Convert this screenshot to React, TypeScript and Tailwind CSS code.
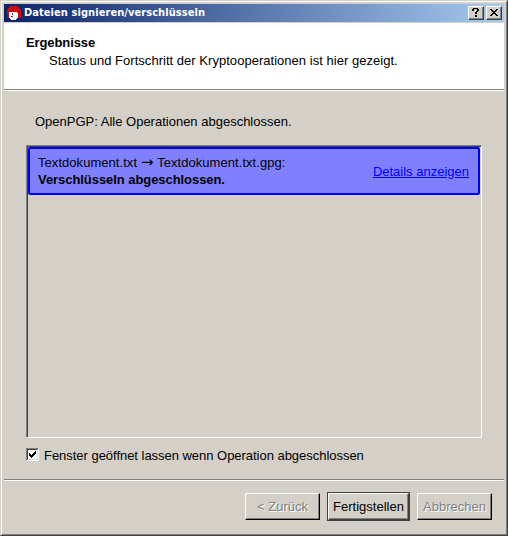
import React from 'react';

function AppIcon() {
  return (
    <svg width="16" height="16" viewBox="0 0 16 16" shapeRendering="crispEdges" className="block shrink-0">
      <path fill="#d40808" d="M4 1h7v1h2v1h1v2h1v8h-4v-1H3v1H1V5h1V3h1V2h1z" />
      <path fill="#9c0a14" d="M11 1h1v1h1v1h-1v1h-1zM13 5h1v3h-1zM12 9h1v3h-1zM1 8h1v5H1zM5 3h3v1H5z" />
      <path fill="#fff" d="M3 7h8v1h1v5h-1v1h-1v1H5v-1H4v-1H3z" />
      <path fill="#33333f" d="M6 8h1v2H6zM5 11h2v1H5z" />
      <path fill="#b8b8c4" d="M7 10h1v1H7z" />
    </svg>
  );
}

function CaptionButton({ children, label }: { children: React.ReactNode; label: string }) {
  return (
    <button
      aria-label={label}
      className="h-[14px] w-4 shrink-0 border border-t-white border-l-white border-r-[#404040] border-b-[#404040] bg-[#d4d0c8] shadow-[inset_-1px_-1px_0_#808080]"
    >
      <svg width="14" height="12" viewBox="0 0 14 12" shapeRendering="crispEdges" className="block">
        {children}
      </svg>
    </button>
  );
}

function Rule() {
  return <div className="h-[2px] shrink-0 border-t border-b border-t-[#808080] border-b-white" />;
}

const disabledButton =
  'h-[27px] w-[75px] border border-t-white border-l-white border-r-black border-b-black pb-px whitespace-nowrap text-[#808080] shadow-[inset_-1px_-1px_0_#808080] [text-shadow:1px_1px_0_#fff]';

export default function App() {
  return (
    <div className="h-[536px] w-[508px] border border-t-[#d4d0c8] border-l-[#d4d0c8] border-r-[#404040] border-b-[#404040] bg-[#d4d0c8] font-['Liberation_Sans',Arial,sans-serif] text-[13px] leading-[17px] text-black">
      <div className="flex h-[534px] w-[506px] flex-col border border-t-white border-l-white border-r-[#808080] border-b-[#808080] p-[2px]">
        <header className="flex h-[18px] shrink-0 items-center bg-linear-to-r/srgb from-[#0a246a] to-[#a6caf0] pr-[2px] pl-[2px]">
          <AppIcon />
          <span className="ml-[2px] flex-1 font-['DejaVu_Sans_Condensed','DejaVu_Sans',sans-serif] text-[11px] leading-[18px] font-bold tracking-[0.07px] whitespace-nowrap text-white">
            Dateien signieren/verschlüsseln
          </span>
          <CaptionButton label="Hilfe">
            <path d="M4 1h5v1H4zM3 2h2v2H3zM8 2h2v2H8zM7 4h2v1H7zM6 5h2v2H6zM6 8h2v2H6z" />
          </CaptionButton>
          <span className="w-[2px]" />
          <CaptionButton label="Schließen">
            <path d="M3 2h2v1H3zM9 2h2v1H9zM4 3h2v1H4zM8 3h2v1H8zM5 4h4v1H5zM6 5h2v1H6zM5 6h4v1H5zM4 7h2v1H4zM8 7h2v1H8zM3 8h2v1H3zM9 8h2v1H9z" />
          </CaptionButton>
        </header>
        <section className="mt-px h-[66px] shrink-0 bg-white pt-[11px] pl-[22px]">
          <h1 className="text-[13px] leading-[18px] font-bold tracking-[-0.1px]">Ergebnisse</h1>
          <p className="pl-[23px] leading-[18px] tracking-[0.03px] whitespace-nowrap">
            Status und Fortschritt der Kryptooperationen ist hier gezeigt.
          </p>
        </section>
        <Rule />
        <main className="flex h-[388px] shrink-0 flex-col pt-[22px] pl-[22px]">
          <p className="h-[32px] pl-[9px] leading-[18px] whitespace-nowrap">OpenPGP: Alle Operationen abgeschlossen.</p>
          <div className="h-[293px] w-[456px] border border-t-[#808080] border-l-[#808080] border-r-white border-b-white">
            <div className="h-[291px] border-t border-l border-[#404040]">
              <div className="flex h-[48px] w-[452px] items-center justify-between rounded-[2px] border-2 border-[#0000ff] bg-[#8080ff] pr-[9px] pl-2">
                <div className="leading-[17px] whitespace-nowrap">
                  <div className="h-[17px] tracking-[0.05px]">
                    Textdokument.txt{' '}
                    <span className="inline-block w-[13px] text-center font-['DejaVu_Sans',sans-serif] text-[15px] leading-[16px]">→</span>{' '}
                    Textdokument.txt.gpg:
                  </div>
                  <div className="font-bold tracking-[-0.06px]">Verschlüsseln abgeschlossen.</div>
                </div>
                <a className="whitespace-nowrap text-[#0000ff] underline">Details anzeigen</a>
              </div>
            </div>
          </div>
          <label className="mt-[8px] flex h-[17px] items-center">
            <span className="size-[13px] border border-t-[#808080] border-l-[#808080] border-r-white border-b-white">
              <span className="block size-[11px] border border-t-[#404040] border-l-[#404040] border-r-[#d4d0c8] border-b-[#d4d0c8] bg-white">
                <svg width="9" height="9" viewBox="0 0 9 9" shapeRendering="crispEdges" className="block">
                  <path d="M1 3h1v1h1v1h1V4h1V3h1V2h1V1h1v3H7v1H6v1H5v1H4v1H3V7H2V6H1z" />
                </svg>
              </span>
            </span>
            <span className="ml-[5px] pt-px tracking-[-0.03px] whitespace-nowrap">Fenster geöffnet lassen wenn Operation abgeschlossen</span>
          </label>
        </main>
        <Rule />
        <footer className="flex items-center justify-end pt-[11px] pr-[12px]">
          <button className={disabledButton}>&lt; Zurück</button>
          <button className="ml-[7px] h-[29px] w-[83px] border border-[#404040] whitespace-nowrap">
            <span className="block h-[27px] border border-t-white border-l-white border-r-[#404040] border-b-[#404040] leading-[25px] shadow-[inset_-1px_-1px_0_#808080]">
              Fertigstellen
            </span>
          </button>
          <button className={`ml-[7px] ${disabledButton}`}>Abbrechen</button>
        </footer>
      </div>
    </div>
  );
}
